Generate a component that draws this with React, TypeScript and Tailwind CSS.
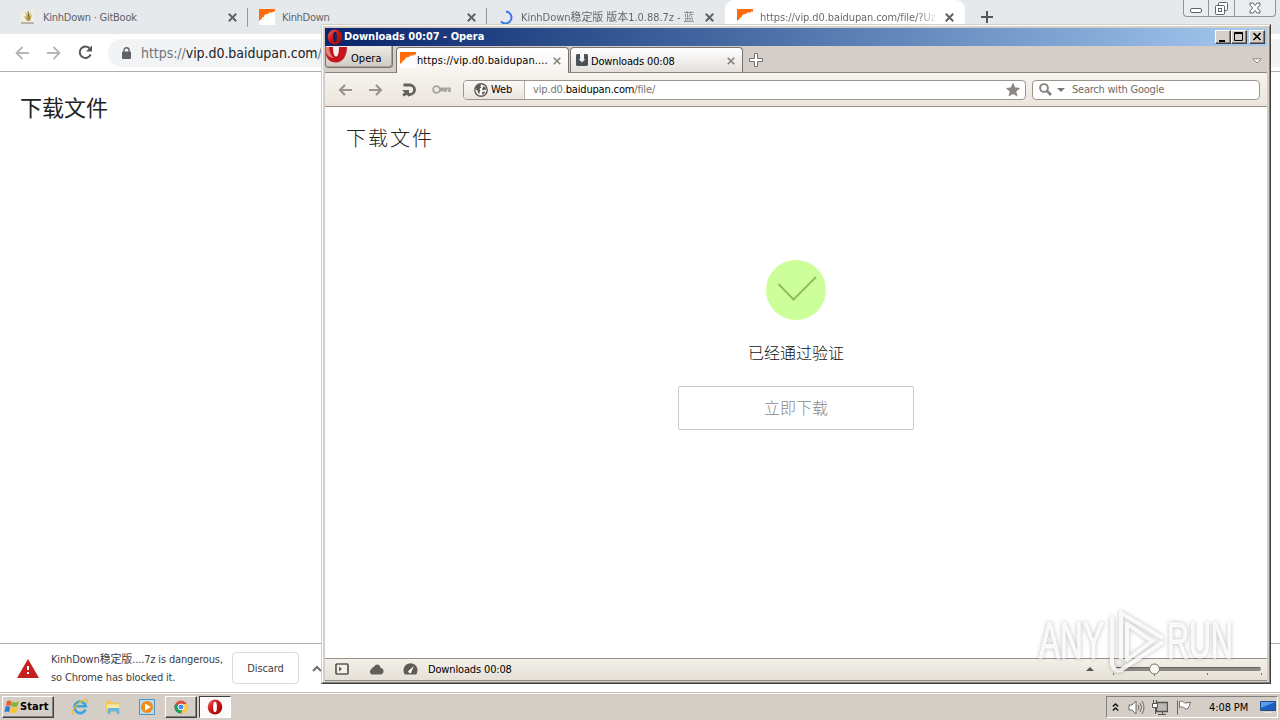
import React from "react";

const ui = "font-['DejaVu_Sans_Condensed','DejaVu_Sans','Noto_Sans_CJK_SC',sans-serif] font-stretch-condensed";

function Label({ className = "", children }: { className?: string; children: React.ReactNode }) {
  return <span className={`block shrink-0 overflow-hidden whitespace-nowrap ${className}`}>{children}</span>;
}

function Cross({ className = "", size = 9, width = 2 }: { className?: string; size?: number; width?: number }) {
  return (
    <svg width={size} height={size} viewBox="0 0 9 9" className={`block shrink-0 ${className}`} fill="none" stroke="currentColor" strokeWidth={width}>
      <path d="M.8 .8 8.2 8.2M8.2 .8.8 8.2" />
    </svg>
  );
}

function PanIcon({ className = "" }: { className?: string }) {
  return (
    <svg width="16" height="16" viewBox="0 0 16 16" className={`block shrink-0 ${className}`}>
      <path d="M0 0h16v16H0z" fill="#fff" />
      <path d="M0 0h16v2.500c-1.500-.2-2.500.3-3 1.300-1.500-.6-3-.3-3.800 1.200C7 4.500 5 5.500 4.800 8 3 8.200 2.300 9.300 2.300 10.500 1.200 10.700.5 11.300 0 12.500z" fill="#ff6a0b" />
    </svg>
  );
}

function OperaLogo({ className = "", hole = "#fff", size = 16 }: { className?: string; hole?: string; size?: number }) {
  return (
    <svg width={size} height={size} viewBox="0 0 16 16" className={`block shrink-0 ${className}`}>
      <defs>
        <linearGradient id="operaRed" x1="0" y1="0" x2="1" y2="1">
          <stop offset="0" stopColor="#ee7a70" />
          <stop offset=".4" stopColor="#cf1a1a" />
          <stop offset="1" stopColor="#920808" />
        </linearGradient>
      </defs>
      <ellipse cx="8" cy="8" rx="7.300" ry="7.600" fill="url(#operaRed)" />
      <ellipse cx="8" cy="8" rx="1.900" ry="5.200" fill={hole} />
    </svg>
  );
}

function ChromeTabs() {
  return (
    <div className="flex h-[34px] bg-[#e5e9ec] text-[11px] text-[#5f6368]">
      <div className="flex h-[34px] w-[247px] shrink-0 items-center pl-5">
        <svg width="16" height="16" viewBox="0 0 16 16" className="block shrink-0">
          <path d="M0 1h15v14H0z" fill="#eeede6" />
          <path d="M1 13h13v2H1z" fill="#b9b3a8" />
          <path d="M5 3 7 8 4 7l3 5h3l2-6-2 1 1-4-3 3z" fill="#c3a34b" />
          <path d="m8 2 1 9" stroke="#7f6d35" />
        </svg>
        <Label className="ml-[7px] w-[179px] pt-px tracking-[-0.25px]">KinhDown · GitBook</Label>
        <Cross className="ml-[6px]" />
      </div>
      <div className="mt-2 h-[19px] w-px shrink-0 bg-[#92979c]" />
      <div className="flex w-[238px] shrink-0 items-center pl-[11px]">
        <PanIcon />
        <Label className="ml-[7px] w-[179px] pt-px tracking-[-0.3px]">KinhDown</Label>
        <Cross className="ml-[6px]" />
      </div>
      <div className="mt-2 h-[19px] w-px shrink-0 bg-[#92979c]" />
      <div className="flex w-[238px] shrink-0 items-center pl-3">
        <svg width="15" height="15" viewBox="0 0 15 15" className="block shrink-0">
          <path d="M7 1.500A6 6 0 1 1 2 11.500" fill="none" stroke="#3b78e7" strokeWidth="2" />
        </svg>
        <Label className="ml-[7px] w-[179px] bg-linear-to-r from-[#5f6368] from-90% to-[#5f6368]/50 bg-clip-text pt-px tracking-[-0.05px] text-transparent">KinhDown稳定版 版本1.0.88.7z - 蓝</Label>
        <Cross className="ml-[5px]" />
      </div>
      <div className="flex w-[240px] shrink-0 items-center rounded-t-[9px] bg-white pl-3">
        <PanIcon />
        <Label className="ml-[7px] w-[178px] bg-linear-to-r from-[#5f6368] from-88% to-white bg-clip-text pt-px tracking-[-0.1px] text-transparent">https://vip.d0.baidupan.com/file/?Uz</Label>
        <Cross className="ml-[7px]" />
      </div>
      <svg width="12" height="12" viewBox="0 0 12 12" className="mt-[11px] ml-4 block shrink-0">
        <path d="M6 0v12M0 6h12" stroke="#55585c" strokeWidth="2" />
      </svg>
      <div className="ml-[190px] flex h-[17px] w-[93px] shrink-0 rounded-b-[4px] border border-t-0 border-[#8f959c] bg-[#e9edf0]">
        <div className="flex w-[25px] justify-center border-r border-[#8f959c] pt-[8px]">
          <div className="h-[5px] w-3 rounded-[2px] border border-[#5b626b] bg-white" />
        </div>
        <div className="flex w-[26px] justify-center border-r border-[#8f959c] pt-[2px]">
          <svg width="13" height="13" viewBox="0 0 13 13" fill="#fff" stroke="#5b626b">
            <rect x="3.500" y=".5" width="9" height="8" rx="1" />
            <rect x=".5" y="3.500" width="9" height="9" rx="1" />
            <rect x="3.500" y="6.500" width="3" height="3" />
          </svg>
        </div>
        <div className="flex grow justify-center pt-[2px]">
          <svg width="12" height="12" viewBox="0 0 12 12" fill="#fff" stroke="#5b626b">
            <path d="M1 1h3l2 2.500L8 1h3v2L8.500 6 11 9v2H8L6 8.500 4 11H1V9l2.500-3L1 3z" />
          </svg>
        </div>
      </div>
    </div>
  );
}

function ChromeToolbar() {
  return (
    <div className="flex h-[38px] items-center border-b border-[#adadad] bg-white">
      <svg width="14" height="14" viewBox="0 0 14 14" className="ml-[15px] block shrink-0" fill="none" stroke="#b4b6b8" strokeWidth="1.800">
        <path d="M14 7H1.500M7.500 1l-6 6 6 6" />
      </svg>
      <svg width="14" height="14" viewBox="0 0 14 14" className="ml-[18px] block shrink-0" fill="none" stroke="#b4b6b8" strokeWidth="1.800">
        <path d="M0 7h12.500M6.500 1l6 6-6 6" />
      </svg>
      <svg width="15" height="15" viewBox="0 0 15 15" className="ml-[17px] block shrink-0">
        <path d="M12.700 9.500A5.700 5.700 0 1 1 12 3.800" fill="none" stroke="#55585c" strokeWidth="2" />
        <path d="M14 .5v6H8z" fill="#55585c" />
      </svg>
      <div className="ml-[15px] flex h-7 grow items-center rounded-l-full bg-[#f1f3f4] pl-[14px]">
        <svg width="9" height="12" viewBox="0 0 9 12" className="block">
          <path d="M2 5V3.200a2.500 2.500 0 0 1 5 0V5" fill="none" stroke="#5f6368" strokeWidth="1.400" />
          <rect y="4.500" width="9" height="7.500" rx="1" fill="#5f6368" />
        </svg>
        <Label className="ml-[10px] text-[14px] tracking-[-0.05px] text-[#70757a]">
          https://<span className="text-[#202124]">vip.d0.baidupan.com</span>/file/
        </Label>
      </div>
    </div>
  );
}

function DownloadShelf() {
  return (
    <div className="flex h-[49px] shrink-0 items-center border-t border-[#adadad] bg-white">
      <svg width="22" height="19" viewBox="0 0 22 19" className="ml-[17px] block shrink-0">
        <path d="M11 0 22 19H0z" fill="#c5221f" />
        <path d="M10 7h2v4h-2zM10 13h2v2h-2z" fill="#fff" />
      </svg>
      <div className="ml-3 w-[181px] shrink-0 pt-px text-[11px] leading-[18px] text-[#3c4043]">
        <Label className="tracking-[-0.15px]">KinhDown稳定版....7z is dangerous,</Label>
        <Label className="tracking-[-0.15px]">so Chrome has blocked it.</Label>
      </div>
      <div className="flex h-8 w-[67px] shrink-0 items-center justify-center rounded-[4px] border border-[#dadce0] pt-px text-[11px] tracking-[-0.1px] text-[#3c4043]">Discard</div>
      <svg width="10" height="7" viewBox="0 0 10 7" className="ml-[13px] block shrink-0">
        <path d="m1 6 4-4 4 4" fill="none" stroke="#6c6f73" strokeWidth="2" />
      </svg>
    </div>
  );
}

function TitleButton({ className = "", children }: { className?: string; children: React.ReactNode }) {
  return (
    <div className={`h-[14px] w-4 shrink-0 border border-t-white border-r-[#404040] border-b-[#404040] border-l-white bg-[#d5cfc8] shadow-[inset_-1px_-1px_0_#808080] ${className}`}>
      <svg width="14" height="12" viewBox="0 0 14 12" className="block">
        {children}
      </svg>
    </div>
  );
}

function OperaTabs() {
  return (
    <div className="flex h-[27px] border-b border-[#8b8580] bg-[#d5cec8] text-[11px] text-black">
      <div className="flex h-[22px] w-[68px] shrink-0 overflow-hidden rounded-b-[4px] border border-t-0 border-[#77726c] bg-linear-to-b from-[#eeebe7] to-[#cfc9c2] shadow-[inset_-1px_-1px_0_#aaa49d]">
        <svg width="21" height="18" viewBox="0 0 21 18" className="block shrink-0">
          <path d="M0 1h21c0 9-4.500 15.500-11 15.500C4.500 16.500.5 13 0 8z" fill="#c4161c" />
          <path d="M0 1h3c.3 5 2 9 5 11-4 0-7.500-3-8-6z" fill="#e5827e" />
          <path d="M7 1h6c0 5-.8 9.500-3 9.500S7 6 7 1z" fill="#f5eeee" />
        </svg>
        <Label className="ml-1 pt-[5px] leading-4 tracking-[0.05px]">Opera</Label>
      </div>
      <div className="mt-[1px] ml-[3px] flex h-[26px] w-[173px] shrink-0 items-center rounded-t-[4px] border border-b-0 border-[#77726c] bg-linear-to-b from-white to-[#f7f3ef] pl-[3px]">
        <PanIcon className="-mt-px" />
        <Label className="ml-px w-[134px] pt-px leading-4 tracking-[0.1px]">https://vip.d0.baidupan....</Label>
        <Cross className="ml-[2px] text-[#85807b]" size={8} width={1.8} />
      </div>
      <div className="mt-[1px] ml-px flex h-[25px] w-[173px] shrink-0 items-center rounded-t-[4px] border border-b-0 border-[#77726c] bg-linear-to-b from-white to-[#e4e0db] pl-[5px]">
        <svg width="12" height="12" viewBox="0 0 12 12" className="block shrink-0">
          <path d="M1 0h3v5H2.800L6 8.500 9.200 5H8V0h3l1 1v10l-1 1H1l-1-1V1z" fill="#4b5257" />
        </svg>
        <Label className="ml-[3px] w-[136px] pt-[3px] leading-4 tracking-[-0.15px]">Downloads 00:08</Label>
        <Cross className="mt-px text-[#85807b]" size={8} width={1.8} />
      </div>
      <svg width="14" height="14" viewBox="0 0 14 14" className="mt-[7px] ml-[6px] block shrink-0">
        <path d="M5.500.5h3v5h5v3h-5v5h-3v-5h-5v-3h5z" fill="#fff" stroke="#77726c" />
      </svg>
      <svg width="10" height="6" viewBox="0 0 10 6" className="mt-3 mr-[5px] ml-auto block shrink-0">
        <path d="M.8.8h8.400L5 5z" fill="#fff" stroke="#8e8882" />
      </svg>
    </div>
  );
}

function OperaToolbar() {
  return (
    <div className="flex h-[34px] items-center border-b border-[#999088] bg-linear-to-b from-[#f7f3ef] to-[#ebe5dd] text-[11px]">
      <svg width="14" height="12" viewBox="0 0 14 12" className="ml-[13px] block shrink-0" fill="none" stroke="#99948e" strokeWidth="2.200">
        <path d="M14 6H2M7 1 2 6l5 5" />
      </svg>
      <svg width="14" height="12" viewBox="0 0 14 12" className="ml-[17px] block shrink-0" fill="none" stroke="#99948e" strokeWidth="2.200">
        <path d="M0 6h12M7 1l5 5-5 5" />
      </svg>
      <svg width="15" height="14" viewBox="0 0 15 14" className="ml-[19px] block shrink-0">
        <path d="M1.500 2h6.300a4.600 4.600 0 0 1 0 9.500H6" fill="none" stroke="#65615d" strokeWidth="2.800" />
        <path d="M0 7h7v7L4.700 11.700 2 13.500.3 11.700 2.500 9.300z" fill="#65615d" />
      </svg>
      <svg width="19" height="9" viewBox="0 0 19 9" className="ml-[15px] block shrink-0" fill="none" stroke="#a8a39d" strokeWidth="1.800">
        <circle cx="4.500" cy="4.500" r="3.400" />
        <path d="M8 3.500h10V6h-2M14 4v3M8 5.500h5" />
      </svg>
      <div className="ml-[12px] flex h-5 w-[563px] shrink-0 items-center overflow-hidden rounded-[4px] border border-[#9b958e] bg-white">
        <div className="flex h-full w-[61px] shrink-0 items-center border-r border-[#b8b2ab] bg-linear-to-b from-[#fbf9f7] to-[#e9e4dd] pl-[10px]">
          <svg width="14" height="14" viewBox="0 0 14 14" className="block shrink-0">
            <circle cx="7" cy="7" r="6.200" fill="#fff" stroke="#5c5854" strokeWidth="1.400" />
            <path d="M2 4c1.500-1.700 3-2.300 5-2.200L6.500 3.500l1 .8L5.500 6l1 1.500-1 1.500v2.500L3.800 9.500 3.600 7.800 1.500 6zM8.500 2.500l3 2 .8 2.500-1.300-.5L9.500 7.500 8 6.500 8.500 5l1-1zM8 9l2.500-.5.5 1.200L8.500 12z" fill="#5c5854" />
          </svg>
          <Label className="ml-[3px] pt-px tracking-[-0.1px]">Web</Label>
        </div>
        <Label className="ml-2 w-[472px] pt-px tracking-[-0.16px] text-[#77736f]">
          vip.d0.<span className="text-black">baidupan.com</span>/file/
        </Label>
        <svg width="16" height="15" viewBox="0 0 16 15" className="block shrink-0">
          <path d="m8 .5 2.200 4.900 5 .5-3.900 3.600 1.200 5L8 12l-4.500 2.500 1.200-5L.8 5.900l5-.5z" fill="#8b8783" />
        </svg>
      </div>
      <div className="ml-[6px] flex h-5 w-[228px] shrink-0 items-center rounded-[4px] border border-[#9b958e] bg-white">
        <svg width="13" height="13" viewBox="0 0 13 13" className="ml-[6px] block shrink-0" fill="none" stroke="#85817c">
          <circle cx="5" cy="5" r="3.900" strokeWidth="1.900" />
          <path d="m8 8 4 4" strokeWidth="2.600" />
        </svg>
        <svg width="8" height="4" viewBox="0 0 8 4" className="ml-[5px] block shrink-0">
          <path d="M0 0h8L4 4z" fill="#7d7975" />
        </svg>
        <Label className="ml-[7px] pt-px tracking-[-0.23px] text-[#6f6b68]">Search with Google</Label>
      </div>
    </div>
  );
}

function OperaStatus() {
  return (
    <div className="flex h-[23px] items-center border-t border-b border-t-[#999088] border-b-[#8f8a84] bg-linear-to-b from-[#f3f0ea] to-[#e6e1d7] text-[11px] text-black">
      <svg width="14" height="12" viewBox="0 0 14 12" className="-mt-px ml-[10px] block shrink-0">
        <rect x="1" y="1" width="12" height="10" rx="1" fill="#f3f0ea" stroke="#5b5753" strokeWidth="1.700" />
        <path d="M4 3.500v5L7 6z" fill="#5b5753" />
      </svg>
      <svg width="15" height="11" viewBox="0 0 15 11" className="-mt-px ml-5 block shrink-0">
        <path d="M3 10.500a3 3 0 0 1-.5-5.500C3 3.500 4.500 3 5 3c1-3.500 6-3.500 6.500.8 4 .4 4 6.200.5 6.700z" fill="#625e5a" />
      </svg>
      <svg width="15" height="12" viewBox="0 0 15 12" className="-mt-px ml-[19px] block shrink-0">
        <path d="M2 11.500a7 7 0 1 1 11 0z" fill="#5f5b57" />
        <path d="m11 3-2.500 5.500a1.600 1.600 0 1 1-2-1.500z" fill="#fff" />
      </svg>
      <Label className="ml-[10px] tracking-[-0.15px]">Downloads 00:08</Label>
      <svg width="8" height="4" viewBox="0 0 8 4" className="-mt-px ml-auto block shrink-0">
        <path d="M0 4h8L4 0z" fill="#55514d" />
      </svg>
      <svg width="151" height="20" viewBox="0 0 151 20" className="-mt-px mr-[4px] ml-[18px] block shrink-0">
        <path d="M1.500 14v2M42.500 14v3M95.500 14v2M149.500 14v2" stroke="#77726c" />
        <rect x="2" y="8" width="147" height="4" rx="2" fill="#8d8983" />
        <path d="M3 8.500h145" stroke="#67635e" />
        <circle cx="42.500" cy="10" r="5" fill="#f8f6f2" stroke="#716d68" />
      </svg>
    </div>
  );
}

function OperaWindow() {
  return (
    <div className="absolute top-[24px] left-[321px] flex h-[660px] w-[950px] flex-col border border-t-[#d5cfc8] border-r-[#404040] border-b-[#404040] border-l-[#d5cfc8] bg-[#d5cfc8]">
      <div className="flex grow flex-col border border-t-white border-r-[#808080] border-b-[#808080] border-l-white p-[2px] pb-px">
        <div className="flex h-[18px] shrink-0 items-center bg-linear-to-r from-[#0a246a] to-[#a6caf0] pl-[2px] text-white">
          <OperaLogo hole="#14215f" />
          <Label className="ml-px text-[11px] font-bold tracking-[-0.02px]">Downloads 00:07 - Opera</Label>
          <div className="mr-[2px] ml-auto flex">
            <TitleButton><path d="M3 9h6v2H3z" /></TitleButton>
            <TitleButton><path d="M2.500 1.500h8v8h-8zM2 2.500h9" fill="none" stroke="#000" /></TitleButton>
            <TitleButton className="ml-[2px]"><path d="m3.500 2 7 7m0-7-7 7" stroke="#000" strokeWidth="1.600" /></TitleButton>
          </div>
        </div>
        <OperaTabs />
        <OperaToolbar />
        <main className="flex min-h-0 grow flex-col items-center bg-white font-['Noto_Sans_CJK_SC',sans-serif]">
          <h1 className="mt-[17px] ml-[21px] self-start text-[20px] leading-7 font-light tracking-[2px] text-[#222]">下载文件</h1>
          <svg width="60" height="60" viewBox="0 0 60 60" className="mt-[108px] block shrink-0">
            <circle cx="30" cy="30" r="30" fill="#ccff99" />
            <path d="m12.500 24 15 15.500L50 17" fill="none" stroke="#8fbf55" strokeWidth="2" />
          </svg>
          <p className="mt-[20px] text-[16px] leading-6 font-light text-[#111]">已经通过验证</p>
          <button className="mt-[22px] h-[44px] w-[236px] shrink-0 rounded-[2px] border border-[#c9c9c9] bg-white pb-[2px] text-[16px] font-light text-[#888]">立即下载</button>
        </main>
        <OperaStatus />
      </div>
    </div>
  );
}

function Watermark() {
  return (
    <svg width="208" height="76" viewBox="0 0 208 76" className="pointer-events-none absolute top-[604px] left-[1033px] block overflow-visible drop-shadow-[0_0_2px_rgba(0,0,0,0.3)]">
      <g fill="#fff" fillOpacity=".85" stroke="#fff" strokeWidth=".8" fontFamily="Liberation Sans, sans-serif" fontSize="50">
        <text x="6" y="54" textLength="65" lengthAdjust="spacingAndGlyphs">ANY</text>
        <text x="134" y="54" textLength="66" lengthAdjust="spacingAndGlyphs">RUN</text>
      </g>
      <g fill="none" stroke="#fff" strokeOpacity=".85" strokeWidth="4" strokeLinejoin="round">
        <path d="M88 55V9l42 25" />
        <path d="M94 20v36l25-19z" />
        <path d="M79 13v47q2 8 9 6l42-28" />
      </g>
    </svg>
  );
}

function Taskbar() {
  return (
    <div className="flex h-7 shrink-0 border-t border-[#c6c1ba] bg-[#d5cec7] text-[11px] text-black shadow-[inset_0_1px_0_#fff]">
      <div className="mt-[3px] ml-[2px] flex h-[22px] w-[52px] shrink-0 items-center border border-t-white border-r-[#404040] border-b-[#404040] border-l-white pl-px shadow-[inset_-1px_-1px_0_#808080]">
        <svg width="16" height="16" viewBox="0 0 17 16" className="block shrink-0">
          <path d="M3 2c2-1.500 3.500-1 5 0L7 7C5 6 3.500 6 2 7z" fill="#e8602c" />
          <path d="M8.500 2.500c2 1 4 1 7.500-1L14.500 7c-2.500 1.500-4.500 1-7 0z" fill="#7db935" />
          <path d="M1.500 8c2-1.500 3.500-1 5 0l-1 5.500C4 12.500 2 12.500.500 13.500z" fill="#2f7bd0" />
          <path d="M7.500 8c2 1 4 1 7 0L13 13.500c-2.500 1.500-4.500 1-6.500 0z" fill="#f8c52c" />
        </svg>
        <Label className="text-[11px] font-bold tracking-[0.1px]">Start</Label>
      </div>
      <svg width="18" height="18" viewBox="0 0 18 18" className="mt-[5px] ml-[17px] block shrink-0">
        <path d="M14.500 11.500a5.700 5.700 0 1 1 .3-3.200H4.500" fill="none" stroke="#37a5de" strokeWidth="2.600" />
        <path d="M2 16.500C-1 13 8 3 15 1.500c3 0 1 3 .5 4" fill="none" stroke="#e9bd3c" strokeWidth="1.300" />
      </svg>
      <svg width="16" height="16" viewBox="0 0 18 16" className="mt-[6px] ml-4 block shrink-0">
        <path d="M1 1h6l1 2h8v11H1z" fill="#ecc95e" />
        <path d="M2 5h14v7H2z" fill="#f9e9a6" />
        <path d="M3 16V9h13v7h-3v-3H6v3z" fill="#69b5df" />
      </svg>
      <svg width="16" height="16" viewBox="0 0 16 16" className="mt-[6px] ml-[18px] block shrink-0">
        <path d="M.5.5h15v15H.5z" fill="#b9dcf2" stroke="#4f93c5" />
        <circle cx="8" cy="8" r="6" fill="#f18a16" />
        <path d="m6 4.500 6 3.500-6 3.500z" fill="#fff" />
      </svg>
      <div className="mt-[3px] ml-[10px] flex h-[22px] w-[32px] shrink-0 items-center justify-center border border-t-white border-r-[#404040] border-b-[#404040] border-l-white shadow-[inset_-1px_-1px_0_#808080]">
        <svg width="14" height="14" viewBox="0 0 14 14">
          <circle cx="7" cy="7" r="6.500" fill="#dd4b3e" />
          <path d="M1.200 4 7 7v6.500A6.500 6.500 0 0 1 1.200 4z" fill="#1aa15f" />
          <path d="M7 4h6a6.500 6.500 0 0 1-6 9.500L9.500 8z" fill="#fccd43" />
          <circle cx="7" cy="7" r="3" fill="#4a8af4" stroke="#fff" />
        </svg>
      </div>
      <div className="mt-[3px] ml-[2px] flex h-[22px] w-[32px] shrink-0 items-center justify-center border border-t-[#404040] border-r-white border-b-white border-l-[#404040] bg-[#fbfaf9]">
        <OperaLogo />
      </div>
      <div className="mt-[3px] mr-[2px] ml-auto flex h-[22px] w-[172px] shrink-0 items-center border border-t-[#808080] border-r-white border-b-white border-l-[#808080]">
        <svg width="7" height="8" viewBox="0 0 7 8" className="-mt-px ml-[5px] block shrink-0" fill="none" stroke="#111" strokeWidth="1.400">
          <path d="m.8 3.500 2.700-2.500 2.700 2.500M.8 7.500 3.500 5l2.700 2.500" />
        </svg>
        <svg width="17" height="15" viewBox="0 0 17 15" className="ml-[9px] block shrink-0" fill="#fff" stroke="#6c6965">
          <path d="M1 5h3l4-4v13l-4-4H1z" />
          <path d="M10 5q1.500 2.500 0 5M12 3q3 4.500 0 9M14 1q4 6.500 0 13" fill="none" />
        </svg>
        <svg width="16" height="15" viewBox="0 0 16 15" className="ml-[7px] block shrink-0" fill="#fff" stroke="#55524f">
          <path d="M4.500 2.500h11v9h-11z" fill="#bcb9b4" strokeWidth="1.300" />
          <path d="M6 14.500h8M10.500 12v2M.5 3.500h5v4h-5zM3.500 8v6M1.500 3V0M4.500 3V0" />
        </svg>
        <svg width="16" height="15" viewBox="0 0 16 15" className="ml-2 block shrink-0" fill="#fff" stroke="#6c6965">
          <path d="M1.500.5v14M3.500 1.500c3-1.500 4 1.500 6 1.500s3-.5 5-1c-1 3-1 4-2.500 6.500-2 1-3 0-4.500-1s-3-.5-4 0z" />
        </svg>
        <Label className="ml-[17px] pt-px tracking-[-0.1px]">4:08 PM</Label>
        <svg width="16" height="14" viewBox="0 0 16 14" className="mr-px ml-auto block shrink-0">
          <path d="M.5 1.500h15v9H.5z" fill="#1c5fc0" stroke="#254c85" />
          <path d="M1 2h14L1 8z" fill="#5b9bea" />
          <path d="M4 12.500h8" stroke="#e7e7e7" />
        </svg>
      </div>
    </div>
  );
}

export default function App() {
  return (
    <div className={`relative flex h-[720px] w-[1280px] flex-col overflow-hidden bg-white leading-4 ${ui}`}>
      <ChromeTabs />
      <ChromeToolbar />
      <div className="grow bg-white">
        <h1 className="mt-[18px] ml-[20px] font-['Noto_Sans_CJK_SC',sans-serif] text-[22px] leading-8 text-[#222]">下载文件</h1>
      </div>
      <DownloadShelf />
      <Taskbar />
      <OperaWindow />
      <Watermark />
    </div>
  );
}
